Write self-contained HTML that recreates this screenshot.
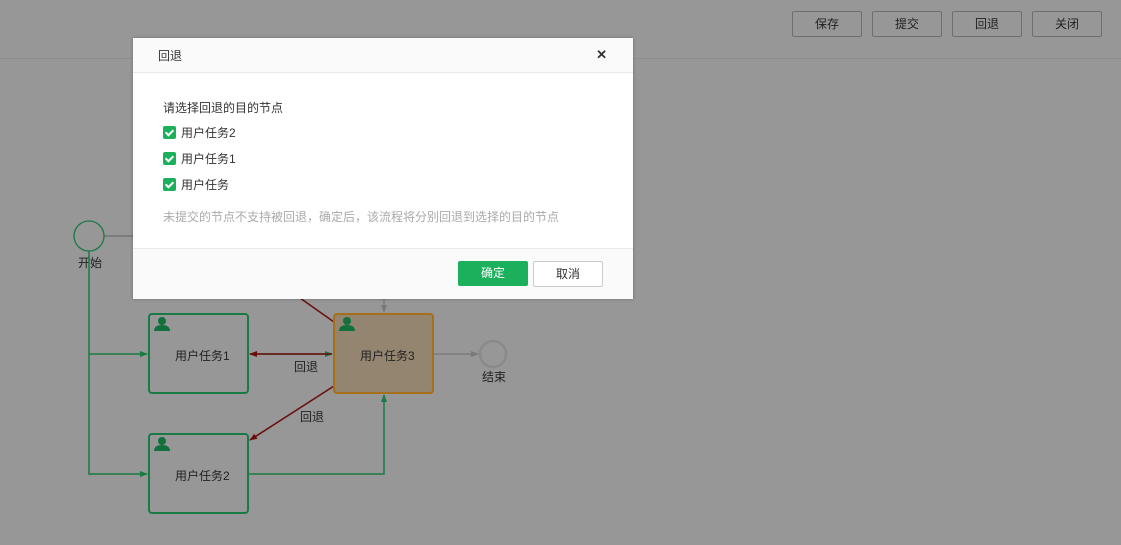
<!DOCTYPE html>
<html><head><meta charset="utf-8"><style>
body{margin:0;width:1121px;height:545px;overflow:hidden;background:#979797;font-family:"Liberation Sans","Noto Sans CJK SC",sans-serif;font-size:12px;position:relative}
.tb{position:absolute;top:11px;height:24px;width:68px;border:1px solid #6e6e6e;background:#979797;border-radius:2px;text-align:center;line-height:24px;color:#222;font-size:12px}
.hl{position:absolute;left:0;right:0;top:58px;height:1px;background:#8d8d8d}
.dlg{position:absolute;left:133px;top:38px;width:500px;height:261px;background:#fff;box-shadow:0 0 3px rgba(0,0,0,.3)}
.hd{height:34px;background:#fafafa;border-bottom:1px solid #e8e8ee;position:relative}
.hd span{position:absolute;left:25px;top:9px;color:#333;font-size:12px}
.x{position:absolute;right:26px;top:9px;font-size:13px;font-weight:bold;color:#333}
.ft{position:absolute;left:0;right:0;bottom:0;height:50px;background:#fafafa;border-top:1px solid #e8e8ee}
.t{position:absolute;left:30px;color:#333}
.cb{display:inline-block;width:13px;height:13px;background:#1bb05b;border-radius:2px;vertical-align:-2px;margin-right:5px;position:relative}
.cb:after{content:"";position:absolute;left:4px;top:1.5px;width:3px;height:6px;border:solid #fff;border-width:0 2px 2px 0;transform:rotate(45deg)}
.b{position:absolute;top:12px;width:68px;height:24px;line-height:24px;text-align:center;border-radius:2px}
</style></head><body>
<div class="tb" style="left:792px">保存</div>
<div class="tb" style="left:872px">提交</div>
<div class="tb" style="left:952px">回退</div>
<div class="tb" style="left:1032px">关闭</div>
<div class="hl"></div>
<svg width="1121" height="545" style="position:absolute;left:0;top:0" font-family="Liberation Sans,Noto Sans CJK SC,sans-serif" font-size="12">
<defs>
<marker id="g" markerWidth="8" markerHeight="8" refX="7" refY="4" orient="auto" markerUnits="userSpaceOnUse"><path d="M0,1 L8,4 L0,7z" fill="#1a7a45"/></marker>
<marker id="r" markerWidth="8" markerHeight="8" refX="7" refY="4" orient="auto" markerUnits="userSpaceOnUse"><path d="M0,1 L8,4 L0,7z" fill="#6a0d0d"/></marker>
<marker id="k" markerWidth="8" markerHeight="8" refX="7" refY="4" orient="auto" markerUnits="userSpaceOnUse"><path d="M0,1 L8,4 L0,7z" fill="#7a7a7a"/></marker>
<g id="u"><circle cx="0" cy="-4" r="4" fill="#12703d"/><path d="M-8,6 Q-8,0 0,0 Q8,0 8,6z" fill="#12703d"/></g>
</defs>
<line x1="104" y1="236" x2="140" y2="236" stroke="#7c7c7c" stroke-width="2"/>
<circle cx="89" cy="236" r="15" fill="none" stroke="#1a7a45" stroke-width="1.3"/>
<text x="78" y="267" fill="#222">开始</text>
<path d="M89,251 V474 H147" fill="none" stroke="#1a7a45" stroke-width="1.5" marker-end="url(#g)"/>
<path d="M89,354 H147" fill="none" stroke="#1a7a45" stroke-width="1.5" marker-end="url(#g)"/>
<path d="M249,474 H384 V395" fill="none" stroke="#1a7a45" stroke-width="1.5" marker-end="url(#g)"/>
<path d="M250,354 H332" fill="none" stroke="#1a7a45" stroke-width="1.5" marker-end="url(#g)"/>
<path d="M332,354 H250" fill="none" stroke="#6a0d0d" stroke-width="1.5" marker-end="url(#r)"/>
<path d="M334,386 L250,440" fill="none" stroke="#6a0d0d" stroke-width="1.5" marker-end="url(#r)"/>
<path d="M300,298 L334,322" stroke="#6a0d0d" stroke-width="1.5"/>
<path d="M384,299 V312" stroke="#7c7c7c" stroke-width="1.5" marker-end="url(#k)"/>
<path d="M434,354 H478" stroke="#7c7c7c" stroke-width="1.5" marker-end="url(#k)"/>
<circle cx="493" cy="354" r="13" fill="none" stroke="#8a8a8a" stroke-width="2.5"/>
<text x="482" y="381" fill="#222">结束</text>
<rect x="149" y="314" width="99" height="79" rx="3" fill="none" stroke="#1a7a45" stroke-width="2"/>
<rect x="149" y="434" width="99" height="79" rx="3" fill="none" stroke="#1a7a45" stroke-width="2"/>
<rect x="334" y="314" width="99" height="79" rx="3" fill="#948570" stroke="#a66f1a" stroke-width="2"/>
<use href="#u" x="162" y="325"/><use href="#u" x="162" y="445"/><use href="#u" x="347" y="325"/>
<text x="175" y="360" fill="#222">用户任务1</text>
<text x="175" y="480" fill="#222">用户任务2</text>
<text x="360" y="360" fill="#222">用户任务3</text>
<text x="294" y="371" fill="#222">回退</text>
<text x="300" y="421" fill="#222">回退</text>
</svg>
<div class="dlg">
<div class="hd"><span>回退</span><div class="x">✕</div></div>
<div class="t" style="top:61px">请选择回退的目的节点</div>
<div class="t" style="top:86px"><i class="cb"></i>用户任务2</div>
<div class="t" style="top:112px"><i class="cb"></i>用户任务1</div>
<div class="t" style="top:138px"><i class="cb"></i>用户任务</div>
<div class="t" style="top:170px;color:#aaa">未提交的节点不支持被回退，确定后，该流程将分别回退到选择的目的节点</div>
<div class="ft">
<div class="b" style="left:325px;width:70px;background:#1bb05b;color:#fff;height:25px">确定</div>
<div class="b" style="left:400px;border:1px solid #ccc;background:#fff;color:#333">取消</div>
</div>
</div>
</body></html>
